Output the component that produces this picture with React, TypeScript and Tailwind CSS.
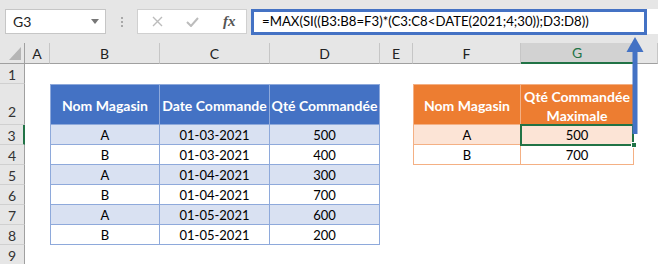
import type { ReactNode } from 'react';

// Excel-like sheet: formula bar, headers, two formatted tables
const COLS = ['A', 'B', 'C', 'D', 'E', 'F', 'G', ''];

const orders = [
  ['A', '01-03-2021', '500'],
  ['B', '01-03-2021', '400'],
  ['A', '01-04-2021', '300'],
  ['B', '01-04-2021', '700'],
  ['A', '01-05-2021', '600'],
  ['B', '01-05-2021', '200'],
];

const maxima = [
  ['A', '500'],
  ['B', '700'],
];

const FORMULA = '=MAX(SI((B3:B8=F3)*(C3:C8<DATE(2021;4;30));D3:D8))';

function RowHead({ n, className = '' }: { n: number; className?: string }) {
  const selected = n === 3;
  return (
    <div
      className={`flex justify-center bg-[#e6e6e6] border-b border-b-[#d0d0d0] text-[14px] text-[#333] ${
        selected ? 'bg-[#d2d2d2] border-r-2 border-r-[#217346]' : 'border-r border-r-[#a0a0a0]'
      } ${className || 'items-center pt-[2px]'}`}
    >
      {n}
    </div>
  );
}

function Blank() {
  return <div className="bg-white" />;
}

function C({ children, className = '' }: { children?: ReactNode; className?: string }) {
  return (
    <div className={`flex items-center justify-center pt-[2px] text-[13px] text-black ${className}`}>
      {children}
    </div>
  );
}

export default function App() {
  return (
    <div className="relative w-[658px] h-[264px] overflow-hidden bg-white font-[Lato,sans-serif]">
      {/* formula bar */}
      <div className="flex items-start h-[43px] bg-[#e6e6e6] pt-[9px] pl-[5px]">
        <div className="flex items-center justify-between w-[101px] h-[25px] border border-[#c6c6c6] bg-white pl-[7px] pr-[6px] text-[14px] text-[#222]">
          <span>G3</span>
          <svg width="8" height="5" viewBox="0 0 8 5">
            <path d="M0 0h8L4 5z" fill="#777" />
          </svg>
        </div>
        <div className="flex flex-col items-center justify-center gap-[2px] w-[31px] h-[25px]">
          <span className="w-[2px] h-[2px] bg-[#a8a8a8]" />
          <span className="w-[2px] h-[2px] bg-[#a8a8a8]" />
          <span className="w-[2px] h-[2px] bg-[#a8a8a8]" />
        </div>
        <div className="flex items-center w-[110px] h-[25px] border border-[#d0d0d0] bg-white">
          <svg className="ml-[14px]" width="11" height="11" viewBox="0 0 11 11">
            <path d="M1 1l9 9M10 1l-9 9" stroke="#bcbcbc" strokeWidth="1.4" />
          </svg>
          <svg className="ml-[23px]" width="13" height="10" viewBox="0 0 13 10">
            <path d="M1 5l4 4 7-8" stroke="#bcbcbc" strokeWidth="2" fill="none" />
          </svg>
          <span className="ml-[24px] font-['Liberation_Serif',serif] italic font-bold text-[15px] leading-none text-[#555]">
            fx
          </span>
        </div>
        <div className="ml-[4px] flex items-center w-[396px] h-[26px] border-[3px] border-[#4472c4] bg-white pl-[8px] text-[13.2px] text-black whitespace-nowrap">
          {FORMULA}
        </div>
        <div className="flex-1 h-[25px] bg-white" />
      </div>

      {/* sheet grid */}
      <div className="grid grid-cols-[25px_25px_110px_110px_110px_33px_108px_113px_1fr] grid-rows-[21px_20px_41px_20px_20px_20px_20px_20px_20px_20px]">
        {/* column headers */}
        <div className="relative bg-[#e6e6e6] border-r border-r-[#a0a0a0] border-b border-b-[#a0a0a0]">
          <svg className="absolute right-[3px] bottom-[3px]" width="12" height="13" viewBox="0 0 12 13">
            <path d="M12 0v13H0z" fill="#b5b5b5" />
          </svg>
        </div>
        {COLS.map((c) => (
          <div
            key={c || 'rest'}
            className={`flex items-center justify-center text-[14px] ${
              c === 'G'
                ? 'bg-[#d2d2d2] text-[#217346] border-b-2 border-b-[#217346] border-r border-r-[#c6c6c6]'
                : 'bg-[#e6e6e6] text-[#222] border-b border-b-[#a0a0a0] border-r border-r-[#c6c6c6]'
            }`}
          >
            {c}
          </div>
        ))}

        {/* row 1 */}
        <RowHead n={1} />
        {COLS.map((c) => (
          <Blank key={c || 'rest'} />
        ))}

        {/* row 2: table headers */}
        <RowHead n={2} className="items-end pb-[2px]" />
        <Blank />
        <C className="bg-[#4472c4] text-white font-bold text-[14px] border border-[#8ea9db]">Nom Magasin</C>
        <C className="bg-[#4472c4] text-white font-bold text-[14px] border-y border-r border-[#8ea9db]">Date Commande</C>
        <C className="bg-[#4472c4] text-white font-bold text-[14px] border-y border-r border-[#8ea9db]">Qté Commandée</C>
        <Blank />
        <C className="bg-[#ed7d31] text-white font-bold text-[14px] border border-[#f4b084]">Nom Magasin</C>
        <C className="bg-[#ed7d31] text-white font-bold text-[14px] leading-[19px] text-center border-y border-r border-[#f4b084]">
          Qté Commandée
          <br />
          Maximale
        </C>
        <Blank />

        {/* rows 3-8 */}
        {orders.map((row, i) => {
          const fill = i % 2 === 0 ? 'bg-[#d9e1f2]' : 'bg-white';
          const max = maxima[i];
          const orange = i === 0 ? 'bg-[#fce4d6]' : 'bg-white';
          return [
            <RowHead key={`h${i}`} n={i + 3} />,
            <Blank key={`a${i}`} />,
            <C key={`b${i}`} className={`${fill} border-x border-b border-[#8ea9db]`}>
              {row[0]}
            </C>,
            <C key={`c${i}`} className={`${fill} border-r border-b border-[#8ea9db]`}>
              {row[1]}
            </C>,
            <C key={`d${i}`} className={`${fill} border-r border-b border-[#8ea9db]`}>
              {row[2]}
            </C>,
            <Blank key={`e${i}`} />,
            max ? (
              <C key={`f${i}`} className={`${orange} border-x border-b border-[#f4b084]`}>
                {max[0]}
              </C>
            ) : (
              <Blank key={`f${i}`} />
            ),
            max ? (
              <C key={`g${i}`} className={`${orange} border-r border-b border-[#f4b084]`}>
                {max[1]}
              </C>
            ) : (
              <Blank key={`g${i}`} />
            ),
            <Blank key={`r${i}`} />,
          ];
        })}

        {/* row 9 */}
        <RowHead n={9} />
        {COLS.map((c) => (
          <Blank key={c || 'rest'} />
        ))}
      </div>

      {/* active cell G3 */}
      <div className="absolute left-[520px] top-[124px] w-[114px] h-[22px] border-2 border-[#217346]" />
      <div className="absolute left-[631px] top-[142px] w-[6px] h-[6px] bg-[#217346] border border-white" />

      {/* arrow pointing at the formula */}
      <svg className="absolute left-[626px] top-[37px]" width="18" height="97" viewBox="0 0 18 97">
        <path d="M9 0L17.5 15H0.5z" fill="#4472c4" />
        <rect x="6.5" y="14" width="5" height="83" fill="#4472c4" />
      </svg>
    </div>
  );
}
